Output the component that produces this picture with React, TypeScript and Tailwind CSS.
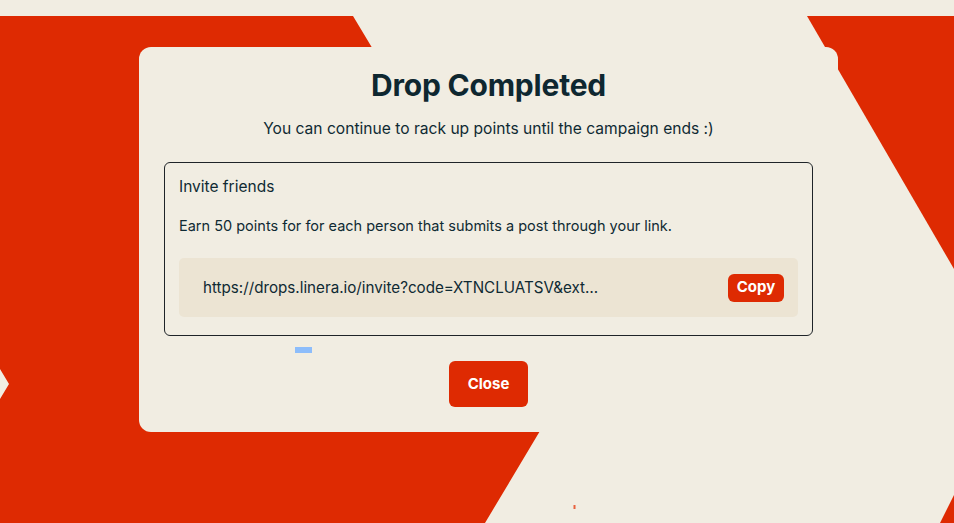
import React from "react";

export default function App() {
  return (
    <div
      className="relative w-[954px] h-[523px] overflow-hidden bg-[#F1EDE2] text-[#0F2A33]"
      style={{ fontFamily: "Inter, 'Noto Sans', sans-serif" }}
    >
      <svg className="absolute inset-0" width="954" height="523" viewBox="0 0 954 523">
        <polygon
          points="0,16 353,16 571,379 485,523 0,523 0,399 9,384 0,369"
          fill="#DE2A02"
        />
        <polygon points="807,16 954,16 954,269" fill="#DE2A02" />
        <polygon points="954,495 954,523 940,523" fill="#DE2A02" />
        <rect x="573.5" y="505" width="2" height="4" fill="#E8623E" />
      </svg>

      <div className="relative pl-[139px] pt-[47px]">
        <div className="w-[699px] h-[385px] bg-[#F1EDE2] rounded-[12px] px-[25px] pt-[20px] pb-[25px] flex flex-col">
          <h1 className="text-center text-[30px] leading-[36px] font-bold text-[#0E2730] tracking-[-0.2px]">
            Drop Completed
          </h1>
          <p className="mt-[14px] text-center text-[15.6px] leading-[24px]">
            You can continue to rack up points until the campaign ends :)
          </p>

          <div className="mt-[21px] border border-[#1F2428] rounded-[6px] px-[14px] pt-[13px] pb-[18px]">
            <div className="text-[15.5px] leading-[22px]">Invite friends</div>
            <div className="mt-[18px] text-[14.5px] leading-[20px]">
              Earn 50 points for for each person that submits a post through your link.
            </div>
            <div className="mt-[22px] h-[59px] rounded-[5px] bg-[#ECE4D3] flex items-center justify-between pl-[24px] pr-[14px]">
              <span className="text-[15.2px] leading-[24px]">
                https://drops.linera.io/invite?code=XTNCLUATSV&amp;ext…
              </span>
              <button className="w-[56px] h-[28px] rounded-[6px] bg-[#DE2A02] text-white text-[15px] font-bold flex items-center justify-center">
                Copy
              </button>
            </div>
          </div>

          <div className="mt-[11px] ml-[131px] w-[17px] h-[6px] bg-[#8DBDFB]" />

          <div className="mt-[8px] flex justify-center">
            <button className="w-[79px] h-[46px] rounded-[6px] bg-[#DE2A02] text-white text-[15px] font-bold flex items-center justify-center">
              Close
            </button>
          </div>
        </div>
      </div>
    </div>
  );
}
